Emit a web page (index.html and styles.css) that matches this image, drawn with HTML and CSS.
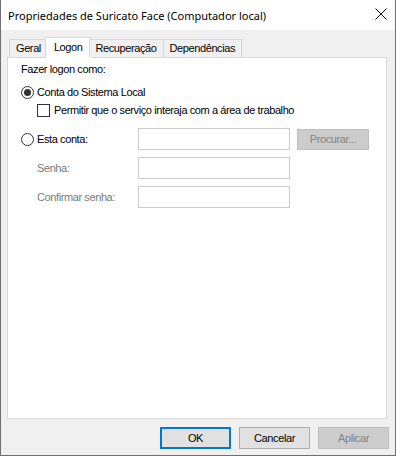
FILE: index.html
```html
<!DOCTYPE html>
<html lang="pt-BR">
<head>
  <meta charset="UTF-8">
  <title>Propriedades de Suricato Face (Computador local)</title>
  <link rel="stylesheet" href="styles.css">
</head>
<body>
  <div class="window">
    <div class="titlebar">
      <span class="title">Propriedades de Suricato Face (Computador local)</span>
      <span class="close">
        <svg width="12" height="12" viewBox="0 0 12 12"><path d="M0.5 0.5L11.5 11.5M11.5 0.5L0.5 11.5" stroke="#111" stroke-width="1" fill="none"/></svg>
      </span>
    </div>

    <div class="tabs">
      <div class="tab">Geral</div>
      <div class="tab active">Logon</div>
      <div class="tab">Recuperação</div>
      <div class="tab">Dependências</div>
    </div>

    <div class="panel">
      <p class="heading">Fazer logon como:</p>

      <label class="option">
        <span class="radio checked"></span>
        Conta do Sistema Local
      </label>

      <label class="option sub">
        <span class="checkbox"></span>
        Permitir que o serviço interaja com a área de trabalho
      </label>

      <div class="account">
        <label class="option">
          <span class="radio"></span>
          Esta conta:
        </label>
        <input class="field" type="text" disabled>
        <button class="btn disabled" disabled>Procurar...</button>

        <span class="muted">Senha:</span>
        <input class="field" type="password" disabled>
        <span></span>

        <span class="muted">Confirmar senha:</span>
        <input class="field" type="password" disabled>
        <span></span>
      </div>
    </div>

    <div class="footer">
      <button class="btn default">OK</button>
      <button class="btn">Cancelar</button>
      <button class="btn disabled" disabled>Aplicar</button>
    </div>
  </div>
</body>
</html>
```

FILE: styles.css
```css
* {
  margin: 0;
  padding: 0;
  box-sizing: border-box;
}

body {
  width: 396px;
  height: 456px;
  font-family: "Liberation Sans", Arial, sans-serif;
  font-size: 11px;
  line-height: 13px;
  letter-spacing: -0.4px;
  color: #000;
  background: #fff;
}

.window {
  width: 396px;
  height: 456px;
  display: flex;
  flex-direction: column;
  background: #f0f0f0;
  border: 1px solid #6f6f6f;
  border-top: none;
}

.titlebar {
  height: 30px;
  display: flex;
  align-items: center;
  justify-content: space-between;
  background: #fff;
  padding-left: 7px;
}

.title {
  font-family: "Noto Sans", "Open Sans", sans-serif;
  font-size: 11px;
  letter-spacing: 0;
}

.close {
  width: 28px;
  height: 30px;
  display: flex;
  align-items: center;
  justify-content: center;
  padding-bottom: 2px;
}

.tabs {
  display: flex;
  align-items: flex-end;
  height: 20px;
  margin: 7px 0 0 9px;
  position: relative;
  z-index: 1;
}

.tab {
  height: 18px;
  padding: 0 6px;
  display: flex;
  align-items: center;
  border: 1px solid #d9d9d9;
  border-bottom: none;
  margin-left: -1px;
  background: #f0f0f0;
}

.tab.active {
  height: 21px;
  margin: 0 -2px -1px -3px;
  padding: 0 8px 1px;
  background: #fff;
}

.panel {
  width: 380px;
  height: 362px;
  margin-left: 6px;
  background: #fff;
  border: 1px solid #d9d9d9;
  padding: 5px 0 0 13px;
}

.heading {
  margin-bottom: 10px;
}

.option {
  display: flex;
  align-items: center;
  gap: 3px;
  height: 13px;
}

.option.sub {
  margin: 5px 0 0 16px;
  gap: 4px;
}

.radio {
  width: 13px;
  height: 13px;
  border: 1px solid #333;
  border-radius: 50%;
  background: #fff;
  display: flex;
  align-items: center;
  justify-content: center;
}

.radio.checked::after {
  content: "";
  width: 7px;
  height: 7px;
  border-radius: 50%;
  background: #333;
}

.checkbox {
  width: 13px;
  height: 13px;
  border: 1px solid #333;
  background: #fff;
}

.account {
  display: grid;
  grid-template-columns: 110px 152px 72px;
  grid-auto-rows: 22px;
  column-gap: 7px;
  row-gap: 7px;
  align-items: center;
  margin-top: 11px;
}

.muted {
  color: #7a7a7a;
  padding-left: 16px;
}

.field {
  height: 22px;
  border: 1px solid #cccccc;
  background: #fff;
}

.btn {
  height: 21px;
  font-family: "Liberation Sans", Arial, sans-serif;
  font-size: 11px;
  letter-spacing: -0.4px;
  color: #000;
  background: #e1e1e1;
  border: 1px solid #adadad;
}

.btn.disabled {
  background: #cccccc;
  border-color: #bfbfbf;
  color: #838383;
}

.btn.default {
  border: 2px solid #0078d7;
}

.footer {
  display: flex;
  justify-content: flex-end;
  gap: 8px;
  padding: 8px 6px 0 0;
}

.footer .btn {
  width: 71px;
  height: 22px;
}
```
